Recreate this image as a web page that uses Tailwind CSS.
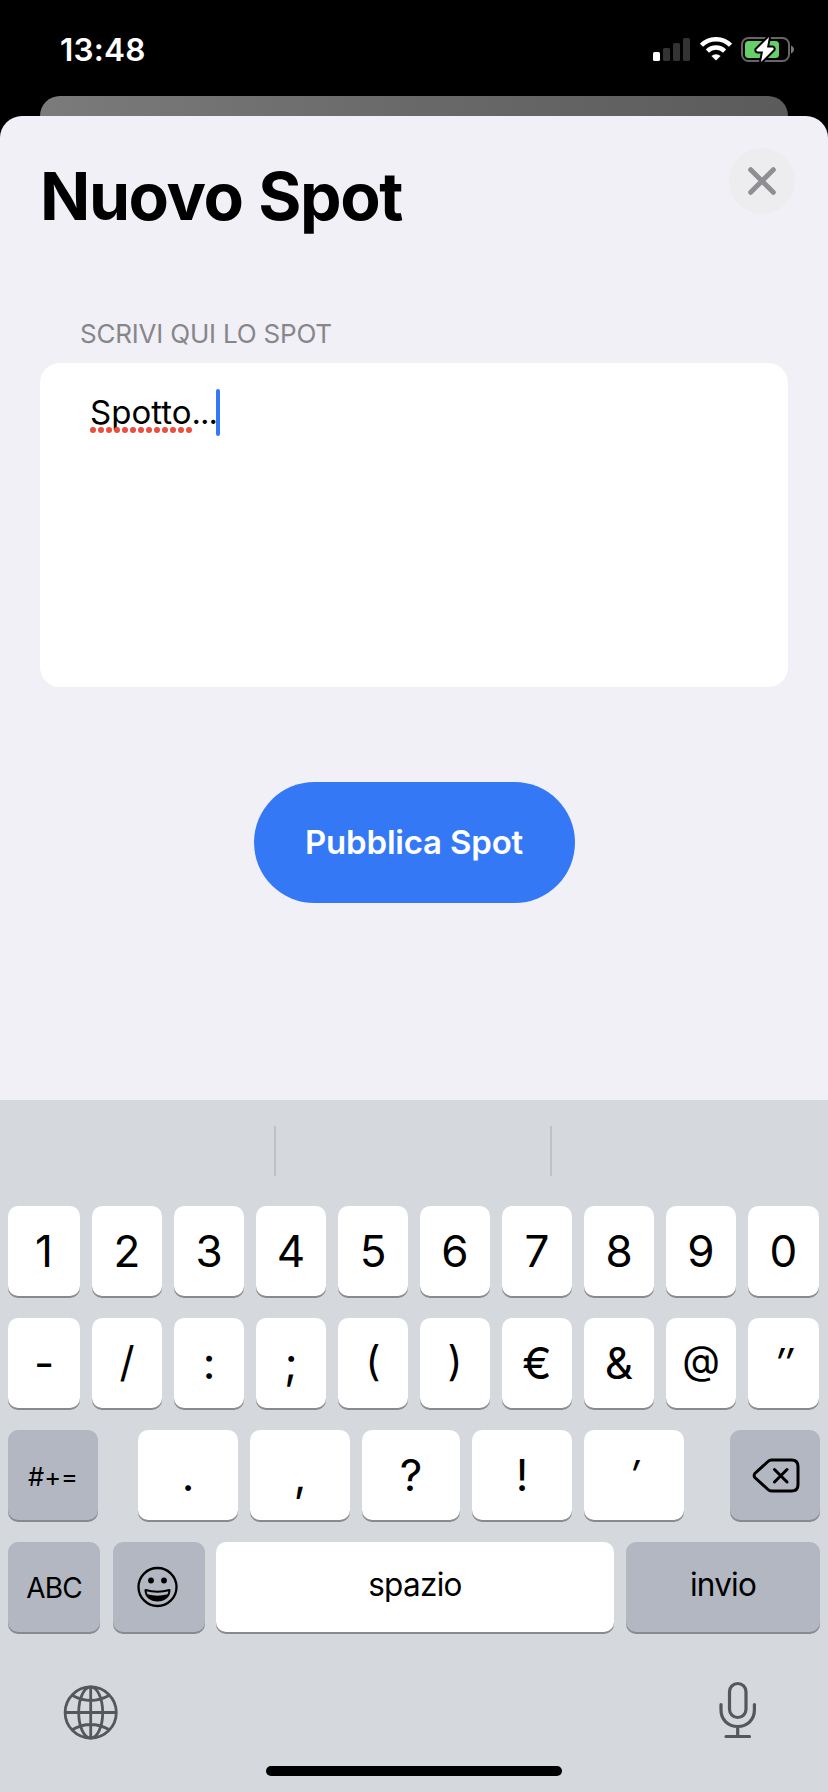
<!DOCTYPE html>
<html lang="it">
<head>
<meta charset="utf-8">
<title>Nuovo Spot</title>
<script src="https://cdn.jsdelivr.net/npm/@tailwindcss/browser@4"></script>
</head>
<body class="bg-black">
<div class="flex h-[1792px] w-[828px] flex-col overflow-hidden bg-black font-['Inter',sans-serif] text-black">
  <!-- Status bar -->
  <header class="flex h-24 shrink-0 items-start justify-between pr-[33px] pl-[60px] text-white">
    <div class="mt-[30px] text-[31.500px] leading-10 font-semibold tracking-[0.2px]">13:48</div>
    <div class="mt-[36px] flex items-start">
      <svg class="mt-[2px] h-6 w-[38px]" viewBox="0 0 38 24">
        <rect x="0" y="14" width="7" height="9" rx="1.5" fill="#fff"/>
        <rect x="10" y="10" width="7" height="13" rx="1.5" fill="#333"/>
        <rect x="20" y="5" width="7" height="18" rx="1.5" fill="#333"/>
        <rect x="30" y="0" width="7" height="23" rx="1.5" fill="#333"/>
      </svg>
      <svg class="mt-[1px] ml-[9px] h-6 w-8" viewBox="0 0 32 24" fill="none" stroke="#fff" stroke-width="4.4">
        <path d="M1.500 8.200a20.500 20.500 0 0 1 29 0"/>
        <path d="M7.400 14.100a12.200 12.200 0 0 1 17.200 0"/>
        <path d="M16 23.600l-4.600-4.600a6.800 6.800 0 0 1 9.200 0z" fill="#fff" stroke="none"/>
      </svg>
      <svg class="ml-[9px] h-7 w-[54px]" viewBox="0 0 54 28">
        <rect x="1" y="2" width="47" height="23" rx="6.5" fill="none" stroke="#666" stroke-width="2"/>
        <rect x="4" y="5" width="34" height="17" rx="3.5" fill="#65cf68"/>
        <path d="M50 9.500c4 1.500 4 6.500 0 8z" fill="#777"/>
        <path d="M28 1L15.500 13.500Q15 15 16.500 15.500H22L20 26L32.500 13.500Q33 12 31.500 11.500H26z" fill="#fff" stroke="#000" stroke-width="4" stroke-linejoin="round"/>
        <path d="M28 1L15.500 13.500Q15 15 16.500 15.500H22L20 26L32.500 13.500Q33 12 31.500 11.500H26z" fill="#fff"/>
      </svg>
    </div>
  </header>

  <!-- Edge of the page behind the sheet -->
  <div class="mx-10 -mb-5 h-10 shrink-0 rounded-t-[20px] bg-linear-to-r from-[#7b7b7b] via-[#696969] to-[#5b5b5b]"></div>

  <!-- Sheet -->
  <main class="relative flex h-[984px] shrink-0 flex-col rounded-t-[22px] bg-[#f1f0f6] px-10">
    <div class="flex h-[208px] items-start justify-between">
      <h1 class="mt-10 text-[66px] leading-[80px] font-bold tracking-[-1.400px] [word-spacing:1.500px]">Nuovo Spot</h1>
      <button class="mt-8 -mr-[7px] flex size-[66px] items-center justify-center rounded-full bg-[#ededef]" aria-label="Chiudi">
        <svg class="size-[28px]" viewBox="0 0 28 28" stroke="#8e8e93" stroke-width="5" stroke-linecap="round"><path d="M2.700 2.700L25.300 25.300M25.300 2.700L2.700 25.300"/></svg>
      </button>
    </div>
    <div class="h-[39px] pl-10 text-[26px] leading-5 tracking-[-0.200px] text-[#87868b]">SCRIVI QUI LO SPOT</div>
    <div class="flex h-[324px] items-start rounded-[20px] bg-white pt-[26px] pl-[50px]">
      <div class="flex w-[126px] flex-col">
        <span class="h-[38px] text-[33px] leading-[47px] whitespace-nowrap">Spotto<span class="tracking-[-1px]">...</span></span>
        <svg class="h-[6px] w-[102px]" viewBox="0 0 102 6"><path d="M3 3H100" stroke="#eb4e3d" stroke-width="6" stroke-linecap="round" stroke-dasharray="0 8"/></svg>
      </div>
      <div class="h-[47px] w-1 rounded-xs bg-[#3478f6]"></div>
    </div>
    <button class="mt-[95px] h-[121px] w-[321px] self-center rounded-full bg-[#3478f6] text-[33px] font-semibold tracking-[-0.200px] text-white">Pubblica Spot</button>
  </main>

  <!-- Keyboard -->
  <section class="flex h-[692px] shrink-0 flex-col bg-[#d5d8dd]">
    <div class="flex h-[106px] shrink-0 gap-[274px] pt-[26px] pl-[274px]">
      <div class="h-[50px] w-[2px] bg-[#c0c1c6]"></div>
      <div class="h-[50px] w-[2px] bg-[#c0c1c6]"></div>
    </div>
    <div class="flex flex-col gap-[22px] px-2 text-[44px] leading-none [&_button]:flex [&_button]:h-[90px] [&_button]:items-center [&_button]:justify-center [&_button]:rounded-[10px] [&_button]:shadow-[0_2px_0_#898a8e]">
      <div class="grid grid-cols-[72px_repeat(8,70px)_71px] gap-x-3">
        <button class="bg-white">1</button><button class="bg-white">2</button><button class="bg-white">3</button><button class="bg-white">4</button><button class="bg-white">5</button><button class="bg-white">6</button><button class="bg-white">7</button><button class="bg-white">8</button><button class="bg-white">9</button><button class="bg-white">0</button>
      </div>
      <div class="grid grid-cols-[72px_repeat(8,70px)_71px] gap-x-3">
        <button class="bg-white">-</button><button class="bg-white pb-[2px] text-[42px]">/</button><button class="bg-white">:</button><button class="bg-white">;</button><button class="bg-white pb-[3px] text-[41px]">(</button><button class="bg-white pb-[3px] text-[41px]">)</button><button class="bg-white">€</button><button class="bg-white">&amp;</button><button class="bg-white pb-[8px] text-[39px]">@</button><button class="bg-white"><span class="-skew-x-12 text-[40px] tracking-[-1px]">″</span></button>
      </div>
      <div class="flex justify-between">
        <button class="w-[90px] bg-[#b3b7c1] pt-[4px] text-[25.500px]">#+=</button>
        <div class="flex gap-3 pr-[6px]">
          <button class="w-[100px] bg-white">.</button><button class="w-[100px] bg-white">,</button><button class="w-[98px] bg-white">?</button><button class="w-[100px] bg-white">!</button><button class="w-[100px] bg-white"><span class="-skew-x-12 text-[40px]">′</span></button>
        </div>
        <button class="w-[90px] bg-[#b3b7c1] pt-[2px] pl-[1px]" aria-label="Cancella">
          <svg class="h-9 w-12" viewBox="0 0 48 36" fill="none" stroke="#000" stroke-width="3" stroke-linecap="round" stroke-linejoin="round"><path d="M19.500 2H39.500Q46 2 46 8.500V26.500Q46 33 39.500 33H19.500Q17.500 33 16 31.500L2.800 19.500Q1.500 17.500 2.800 15.500L16 3.500Q17.500 2 19.500 2zM22.500 11.500L35 24M35 11.500L22.500 24"/></svg>
        </button>
      </div>
      <div class="flex">
        <button class="w-[92px] bg-[#b3b7c1] pt-[2px] text-[28px] tracking-[-0.800px]">ABC</button>
        <button class="ml-[13px] w-[92px] bg-[#b3b7c1] pr-[2px]" aria-label="Emoji">
          <svg class="size-[42px]" viewBox="0 0 42 42"><circle cx="20.500" cy="21" r="19" fill="none" stroke="#000" stroke-width="2.300"/><circle cx="14" cy="14.500" r="2.900"/><circle cx="27" cy="14.500" r="2.900"/><path d="M8.500 24Q20.500 27.500 32.500 24C32.500 30.500 27 34.500 20.500 34.500S8.500 30.500 8.500 24z" fill="none" stroke="#000" stroke-width="2" stroke-linejoin="round"/><path d="M10.500 28.300Q20.500 31 30.500 28.300C28.500 32.500 25 34.500 20.500 34.500S12.500 32.500 10.500 28.300z"/></svg>
        </button>
        <button class="ml-[11px] w-[398px] bg-white pb-[4px] text-[31.500px] tracking-[-0.700px]">spazio</button>
        <button class="ml-3 w-[194px] bg-[#b3b7c1] pb-[4px] text-[31.500px] tracking-[-0.800px]">invio</button>
      </div>
    </div>
    <div class="flex items-start justify-between pt-[48px] pr-[71px] pl-[63px]">
      <svg class="mt-[5px] size-[56px]" viewBox="0 0 56 56" fill="none" stroke="#54575c" stroke-width="2.800"><circle cx="27.700" cy="27.500" r="25.600"/><ellipse cx="27.700" cy="27.500" rx="12" ry="25.600"/><path d="M27.700 2V53M2 27.500H53.500M9.500 10.500Q27.700 20.500 46 10.500M9.500 44.500Q27.700 34.500 46 44.500"/></svg>
      <svg class="h-[60px] w-[38px]" viewBox="0 0 38 60" fill="none" stroke="#54575c" stroke-width="3.200" stroke-linecap="round"><rect x="10.500" y="3.500" width="16.500" height="34" rx="8.250"/><path d="M2 24.500V30C2 39.500 9 46.500 18.700 46.500S35.400 39.500 35.400 30V24.500M18.700 46.500V56.500M7 56.500H30.500"/></svg>
    </div>
    <div class="mt-auto mb-4 h-[10px] w-[296px] self-center rounded-full bg-black"></div>
  </section>
</div>
</body>
</html>
